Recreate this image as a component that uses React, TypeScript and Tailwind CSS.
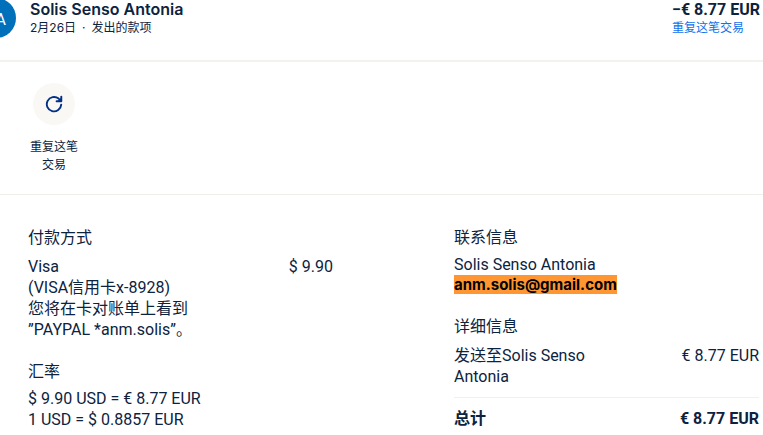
interface DetailRow {
  label: string
  value: string
}

const TRANSFER: DetailRow = { label: '发送至Solis Senso Antonia', value: '€ 8.77 EUR' }
const TOTAL: DetailRow = { label: '总计', value: '€ 8.77 EUR' }

const RATES = ['$ 9.90 USD = € 8.77 EUR', '1 USD = $ 0.8857 EUR']

function RepeatIcon() {
  return (
    <svg viewBox="0 0 18 18" className="w-[18px] h-[18px]" fill="none" stroke="currentColor" strokeWidth="1.9" aria-hidden="true">
      <path d="M16.2 9.6A7.2 7.2 0 1 1 13.6 3.6L15.4 5.4" strokeLinecap="round" />
      <path d="M16.3 1.6V6.3H11.6" strokeLinecap="round" strokeLinejoin="round" />
      <path d="M16.3 2.6V6.3H12.6Z" fill="currentColor" stroke="none" />
    </svg>
  )
}

function SectionTitle({ children }: { children: React.ReactNode }) {
  return <h2 className="text-base leading-6">{children}</h2>
}

function TransactionHeader() {
  return (
    <header className="flex justify-between pr-[3px] pb-[22px] border-b-2 border-[#f3f3ee]">
      <div className="flex">
        {/* Avatar runs off the left edge */}
        <div className="-ml-6 w-10 h-10 -mt-0.5 pt-1 shrink-0 rounded-full bg-[#0070ba] text-white text-base flex items-center justify-center">
          <span>SA</span>
        </div>
        <div className="ml-3.5">
          <h1 className="text-base leading-[19px] font-semibold font-['Inter','Noto_Sans_CJK_SC',sans-serif]">
            Solis Senso Antonia
          </h1>
          <p className="flex gap-1.5 text-xs leading-[18px] font-['Inter','Noto_Sans_CJK_SC',sans-serif]">
            <span>2月26日</span>
            <span>·</span>
            <span>发出的款项</span>
          </p>
        </div>
      </div>
      <div>
        <p className="text-base leading-[19px] font-bold">−€ 8.77 EUR</p>
        <a href="#" className="block text-xs leading-[18px] text-[#1072eb]">重复这笔交易</a>
      </div>
    </header>
  )
}

function PaymentMethod() {
  return (
    <section>
      <SectionTitle>付款方式</SectionTitle>
      <div className="mt-1.5 flex justify-between">
        <p className="w-44">
          Visa
          <br />
          (VISA信用卡x-8928)
          <br />
          您将在卡对账单上看到
          <br />
          ”PAYPAL *anm.solis”。
        </p>
        <p>$ 9.90</p>
      </div>
    </section>
  )
}

export default function App() {
  return (
    <main
      lang="zh-CN"
      className="overflow-hidden bg-white text-[#0c2340] text-base leading-[21px] font-['Roboto','Noto_Sans_CJK_SC',sans-serif]"
    >
      <TransactionHeader />

      <div className="pl-[30px] pt-[21px] pb-5 border-b border-[#eeeeea]">
        <button type="button" className="w-12 flex flex-col items-center text-xs leading-[18px]">
          <span className="w-[42px] h-[42px] rounded-full bg-[#f9f8f5] text-[#003087] flex items-center justify-center">
            <RepeatIcon />
          </span>
          <span className="mt-[13px]">重复这笔交易</span>
        </button>
      </div>

      <div className="flex pt-[31px] pl-7 pr-1">
        <div className="w-[305px] mr-[121px] shrink-0">
          <PaymentMethod />
          <section className="mt-5">
            <SectionTitle>汇率</SectionTitle>
            <ul className="mt-1">
              {RATES.map(rate => (
                <li key={rate}>{rate}</li>
              ))}
            </ul>
          </section>
        </div>

        <div className="flex-1">
          <section>
            <SectionTitle>联系信息</SectionTitle>
            <p className="mt-1">Solis Senso Antonia</p>
            <p className="text-[15px] leading-5 font-bold font-['Inter','Noto_Sans_CJK_SC',sans-serif]">
              <mark className="bg-[#ff9632] text-black">anm.solis@gmail.com</mark>
            </p>
          </section>
          <section className="mt-5">
            <SectionTitle>详细信息</SectionTitle>
            <dl className="mt-1.5">
              <div className="pb-2.5 flex justify-between border-b border-[#f5efea]">
                <dt className="w-36">{TRANSFER.label}</dt>
                <dd>{TRANSFER.value}</dd>
              </div>
              <div className="pt-2.5 flex justify-between font-bold">
                <dt>{TOTAL.label}</dt>
                <dd>{TOTAL.value}</dd>
              </div>
            </dl>
          </section>
        </div>
      </div>
    </main>
  )
}
